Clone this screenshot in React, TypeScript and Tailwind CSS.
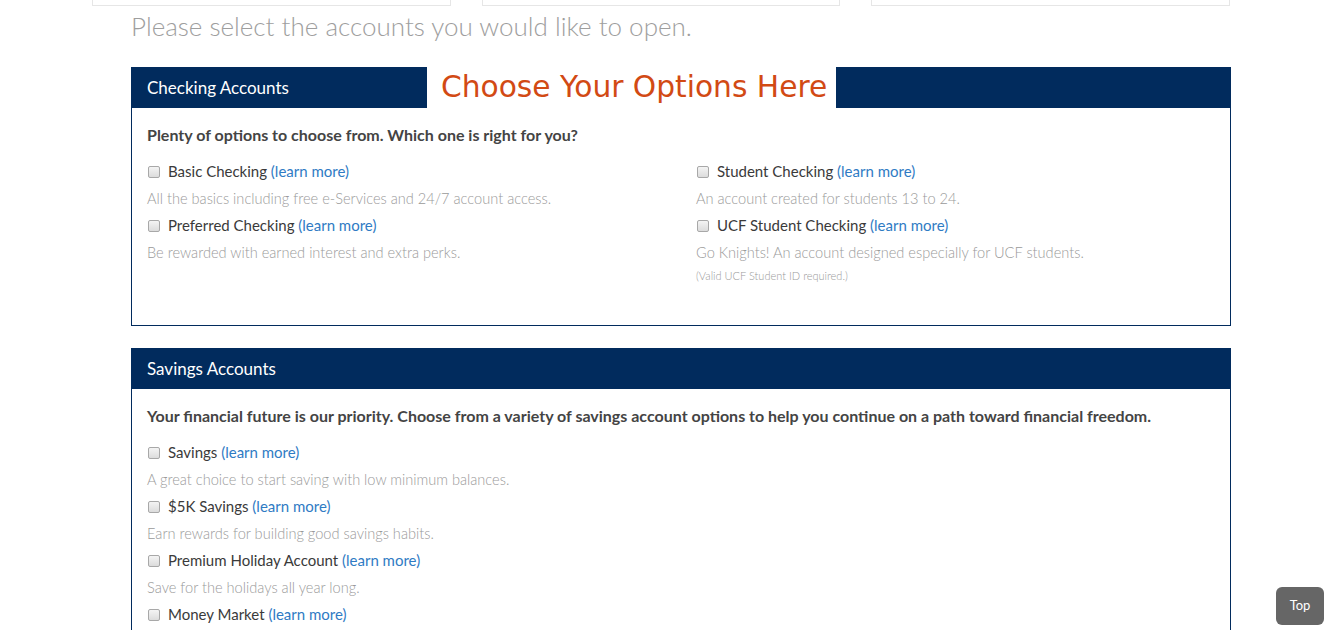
import React from 'react';

type Option = {
  label: string;
  desc: string;
  note?: string;
};

const checking: Option[][] = [
  [
    { label: 'Basic Checking', desc: 'All the basics including free e-Services and 24/7 account access.' },
    { label: 'Preferred Checking', desc: 'Be rewarded with earned interest and extra perks.' },
  ],
  [
    { label: 'Student Checking', desc: 'An account created for students 13 to 24.' },
    {
      label: 'UCF Student Checking',
      desc: 'Go Knights! An account designed especially for UCF students.',
      note: '(Valid UCF Student ID required.)',
    },
  ],
];

const savings: Option[] = [
  { label: 'Savings', desc: 'A great choice to start saving with low minimum balances.' },
  { label: '$5K Savings', desc: 'Earn rewards for building good savings habits.' },
  { label: 'Premium Holiday Account', desc: 'Save for the holidays all year long.' },
  { label: 'Money Market', desc: '' },
];

function Checkbox() {
  return (
    <span className="inline-block w-[12px] h-[12px] rounded-[2px] border border-[#a8a8a8] bg-gradient-to-b from-[#f4f4f4] to-[#dcdcdc] mr-[8px] shrink-0" />
  );
}

function OptionItem({ option }: { option: Option }) {
  return (
    <div>
      <label className="flex items-center h-[27px] text-[15px] text-[#3a3a3a] pl-[1px]">
        <Checkbox />
        <span>
          {option.label}{' '}
          <a className="text-[#2f7bc4]" href="#">
            (learn more)
          </a>
        </span>
      </label>
      {option.desc && (
        <p className="h-[27px] leading-[27px] text-[14.6px] font-light text-[#9a9a9a]">{option.desc}</p>
      )}
      {option.note && (
        <p className="h-[20px] leading-[20px] text-[11px] font-light text-[#9a9a9a]">{option.note}</p>
      )}
    </div>
  );
}

function PanelHeader({ title }: { title: string }) {
  return (
    <div className="h-[41px] bg-[#012b5d] flex items-center px-[16px] text-white text-[17px]">
      {title}
    </div>
  );
}

export default function App() {
  return (
    <div
      className="relative w-[1326px] h-[630px] overflow-hidden bg-white"
      style={{ fontFamily: 'Lato, "Open Sans", sans-serif' }}
    >
      <div className="flex gap-[31px] ml-[92px] w-[1138px]">
        <div className="h-[6px] flex-1 border border-t-0 border-[#e6e6e6]" />
        <div className="h-[6px] flex-1 border border-t-0 border-[#e6e6e6]" />
        <div className="h-[6px] flex-1 border border-t-0 border-[#e6e6e6]" />
      </div>

      <div className="ml-[131px] w-[1100px]">
        <h1 className="text-[26px] font-light text-[#9e9e9e] leading-[40px]">
          Please select the accounts you would like to open.
        </h1>

        <section className="relative mt-[21px]">
          <PanelHeader title="Checking Accounts" />
          <div className="absolute top-0 left-[296px] w-[409px] h-[41px] bg-white flex items-center pl-[14px]">
            <span
              className="text-[#d24a14] text-[29.7px]"
              style={{ fontFamily: '"DejaVu Sans", Verdana, sans-serif' }}
            >
              Choose Your Options Here
            </span>
          </div>
          <div className="border border-t-0 border-[#012b5d] pt-[17px] pb-[39px]">
            <p className="px-[15px] text-[16px] font-bold text-[#444] leading-[20px] mb-[13px]">
              Plenty of options to choose from. Which one is right for you?
            </p>
            <div className="grid grid-cols-2">
              {checking.map((col, i) => (
                <div key={i} className="px-[15px]">
                  {col.map((o) => (
                    <OptionItem key={o.label} option={o} />
                  ))}
                </div>
              ))}
            </div>
          </div>
        </section>

        <section className="mt-[22px]">
          <PanelHeader title="Savings Accounts" />
          <div className="border border-t-0 border-[#012b5d] pt-[17px] pb-[38px]">
            <p className="px-[15px] text-[16px] font-bold text-[#444] leading-[20px] mb-[13px]">
              Your financial future is our priority. Choose from a variety of savings account options to help you
              continue on a path toward financial freedom.
            </p>
            <div className="px-[15px]">
              {savings.map((o) => (
                <OptionItem key={o.label} option={o} />
              ))}
            </div>
          </div>
        </section>
      </div>

      <button className="absolute left-[1276px] top-[587px] w-[48px] h-[38px] rounded-[6px] bg-[#666] text-white text-[13px]">
        Top
      </button>
    </div>
  );
}
